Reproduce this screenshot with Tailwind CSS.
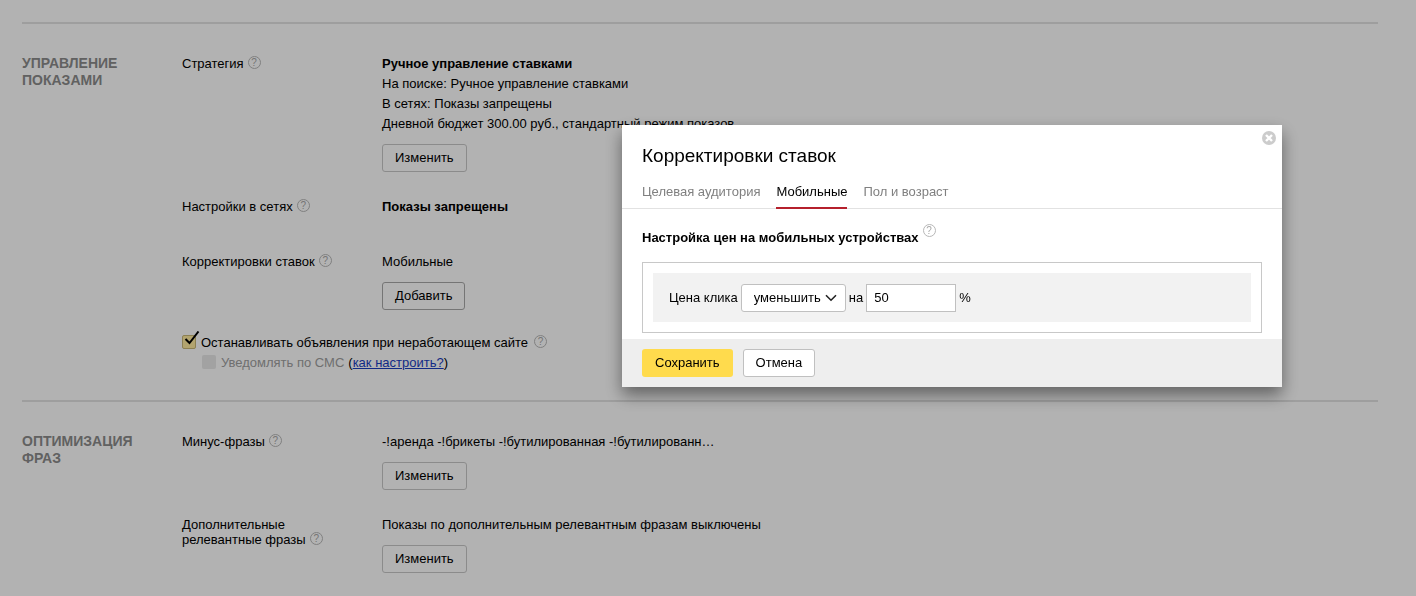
<!DOCTYPE html>
<html lang="ru">
<head>
  <meta charset="UTF-8">
  <title>Параметры кампании</title>
  <script src="https://cdn.jsdelivr.net/npm/@tailwindcss/browser@4"></script>
</head>
<body class="bg-white min-h-screen text-[13px] leading-5 text-black font-['Liberation_Sans',Arial,sans-serif]">

  <main class="pl-[22px] pr-[38px] pt-[22px]">

    <!-- Управление показами -->
    <section class="border-t-2 border-[#e2e2e2] pt-[30px] pb-[27px] flex">
      <h2 class="w-40 shrink-0 pt-px text-sm leading-[17px] font-bold text-[#8c8c8c] uppercase">Управление<br>показами</h2>
      <div class="flex-1">
        <div class="flex mb-[25px]">
          <div class="w-[200px] shrink-0 flex items-start gap-1">
            <span>Стратегия</span>
            <button type="button" aria-label="Справка: стратегия" class="mt-[2px] size-[13px] rounded-full border border-[#b8b8b8] text-[10px] leading-[11px] text-[#a8a8a8] text-center">?</button>
          </div>
          <div>
            <p class="font-bold">Ручное управление ставками</p>
            <p>На поиске: Ручное управление ставками</p>
            <p>В сетях: Показы запрещены</p>
            <p>Дневной бюджет 300.00 руб., стандартный режим показов</p>
            <button type="button" class="mt-[10px] h-7 px-3 border border-[#c8c8c8] rounded-[3px] block">Изменить</button>
          </div>
        </div>

        <div class="flex mb-[35px]">
          <div class="w-[200px] shrink-0 flex items-start gap-1">
            <span>Настройки в сетях</span>
            <button type="button" aria-label="Справка: настройки в сетях" class="mt-[2px] size-[13px] rounded-full border border-[#b8b8b8] text-[10px] leading-[11px] text-[#a8a8a8] text-center">?</button>
          </div>
          <p class="font-bold">Показы запрещены</p>
        </div>

        <div class="flex mb-[23px]">
          <div class="w-[200px] shrink-0 flex items-start gap-1">
            <span>Корректировки ставок</span>
            <button type="button" aria-label="Справка: корректировки ставок" class="mt-[2px] size-[13px] rounded-full border border-[#b8b8b8] text-[10px] leading-[11px] text-[#a8a8a8] text-center">?</button>
          </div>
          <div>
            <p>Мобильные</p>
            <button type="button" class="mt-[10px] h-7 px-3 border border-[#a8a8a8] rounded-[3px] block">Добавить</button>
          </div>
        </div>

        <div class="flex items-start">
          <div class="relative mt-[2px] mr-[5px]">
            <input type="checkbox" id="stop_ads" checked class="block appearance-none size-[14px] rounded-[2px] border border-[#c9b878] bg-[#ffeba0]">
            <svg class="absolute left-[2px] -top-1 w-4 h-4 pointer-events-none" viewBox="0 0 16 16" fill="none" stroke="#000" stroke-width="2"><path d="M1.5 8L5.5 12L14.5 .5"/></svg>
          </div>
          <label for="stop_ads">Останавливать объявления при неработающем сайте</label>
          <button type="button" aria-label="Справка: остановка объявлений" class="mt-[2px] ml-[6px] size-[13px] rounded-full border border-[#b8b8b8] text-[10px] leading-[11px] text-[#a8a8a8] text-center">?</button>
        </div>
        <div class="flex items-start pl-5">
          <input type="checkbox" id="sms" disabled class="appearance-none mt-[2px] mr-[5px] size-[14px] rounded-[2px] bg-[#e8e8e8]">
          <label for="sms" class="text-[#a0a0a0] mr-1">Уведомлять по СМС</label>
          <span>(<a href="#" class="text-[#1a3dc1] underline">как настроить?</a>)</span>
        </div>
      </div>
    </section>

    <!-- Оптимизация фраз -->
    <section class="border-t-2 border-[#e2e2e2] pt-[30px] flex">
      <h2 class="w-40 shrink-0 pt-px text-sm leading-[17px] font-bold text-[#8c8c8c] uppercase">Оптимизация<br>фраз</h2>
      <div class="flex-1">
        <div class="flex mb-[25px]">
          <div class="w-[200px] shrink-0 flex items-start gap-1">
            <span>Минус-фразы</span>
            <button type="button" aria-label="Справка: минус-фразы" class="mt-[2px] size-[13px] rounded-full border border-[#b8b8b8] text-[10px] leading-[11px] text-[#a8a8a8] text-center">?</button>
          </div>
          <div>
            <p>-!аренда -!брикеты -!бутилированная -!бутилированн…</p>
            <button type="button" class="mt-[10px] h-7 px-3 border border-[#c8c8c8] rounded-[3px] block">Изменить</button>
          </div>
        </div>

        <div class="flex">
          <div class="w-[200px] shrink-0 pt-[2px] flex items-end self-start gap-1 leading-[15px]">
            <span>Дополнительные<br>релевантные фразы</span>
            <button type="button" aria-label="Справка: дополнительные фразы" class="mb-[2px] size-[13px] rounded-full border border-[#b8b8b8] text-[10px] leading-[11px] text-[#a8a8a8] text-center">?</button>
          </div>
          <div>
            <p>Показы по дополнительным релевантным фразам выключены</p>
            <button type="button" class="mt-[10px] h-7 px-3 border border-[#c8c8c8] rounded-[3px] block">Изменить</button>
          </div>
        </div>
      </div>
    </section>
  </main>

  <!-- Попап -->
  <div class="fixed inset-0 bg-black/30 flex justify-end items-start pt-[125px] pr-[134px]">
    <div role="dialog" aria-labelledby="popup_title" class="relative w-[660px] bg-white shadow-[0_8px_16px_rgba(0,0,0,0.45)]">
      <button type="button" aria-label="Закрыть" class="absolute top-[6px] right-[6px]">
        <svg class="block size-[14px]" viewBox="0 0 14 14"><circle cx="7" cy="7" r="7" fill="#ccc"/><path d="M4 4L10 10M10 4L4 10" stroke="#fff" stroke-width="2.4"/></svg>
      </button>

      <h1 id="popup_title" class="px-5 pt-[19px] text-[19px] leading-6">Корректировки ставок</h1>
      <nav class="flex gap-4 px-5 pt-[14px] border-b border-[#e2e2e2] text-[#808080]">
        <a href="#" class="pb-[6px]">Целевая аудитория</a>
        <a href="#" class="pb-[5px] -mb-px border-b-2 border-[#b5202c] text-black">Мобильные</a>
        <a href="#" class="pb-[6px]">Пол и возраст</a>
      </nav>

      <form>
        <div class="px-5 pt-[19px] pb-[6px]">
          <div class="flex items-start gap-1">
            <h3 class="font-bold">Настройка цен на мобильных устройствах</h3>
            <button type="button" aria-label="Справка: цены на мобильных" class="-mt-1 size-[13px] rounded-full border border-[#b8b8b8] text-[10px] leading-[11px] text-[#a8a8a8] text-center">?</button>
          </div>
          <div class="mt-[14px] border border-[#c8c8c8] p-[10px]">
            <div class="flex items-center bg-[#f2f2f2] h-[49px] px-4">
              <label for="direction">Цена клика</label>
              <div class="relative mx-[3px]">
                <select id="direction" class="block appearance-none w-[105px] h-7 pl-3 bg-white border border-[#c0c0c0] rounded-[3px]">
                  <option>уменьшить</option>
                  <option>увеличить</option>
                </select>
                <svg class="absolute right-[9px] top-[10px] w-3 h-2 pointer-events-none" viewBox="0 0 12 8" fill="none" stroke="#222" stroke-width="1.6"><path d="M1 1.2L6 6.2L11 1.2"/></svg>
              </div>
              <label for="percent">на</label>
              <input type="text" id="percent" value="50" class="mx-[3px] w-[90px] h-7 px-[7px] bg-white border border-[#c0c0c0]">
              <span>%</span>
            </div>
          </div>
        </div>

        <div class="flex gap-[10px] px-5 py-[10px] bg-[#eee]">
          <button type="submit" class="h-7 px-[13px] rounded-[3px] bg-[#ffdb4d]">Сохранить</button>
          <button type="button" class="h-7 px-3 rounded-[3px] border border-[#c0c0c0] bg-white">Отмена</button>
        </div>
      </form>
    </div>
  </div>

</body>
</html>
